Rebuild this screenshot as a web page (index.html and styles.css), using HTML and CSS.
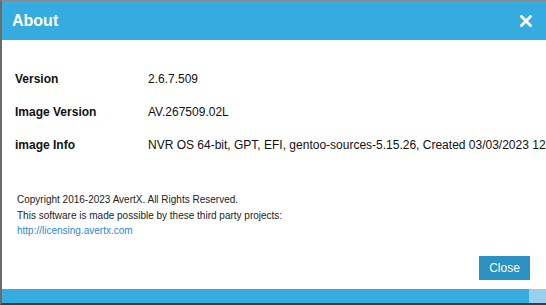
FILE: index.html
```html
<!DOCTYPE html>
<html>
<head>
<meta charset="utf-8">
<link rel="stylesheet" href="styles.css">
</head>
<body>
<div class="frame">
  <div class="dialog">
    <div class="header">
      <span class="title">About</span>
      <span class="close-x">
        <svg width="12" height="12" viewBox="0 0 12 12"><path d="M1.5 1.5 L10.5 10.5 M10.5 1.5 L1.5 10.5" stroke="#fff" stroke-width="2.8" stroke-linecap="square"/></svg>
      </span>
    </div>
    <div class="body">
      <div class="rows">
        <div class="row"><span class="label">Version</span><span class="value">2.6.7.509</span></div>
        <div class="row"><span class="label">Image Version</span><span class="value">AV.267509.02L</span></div>
        <div class="row"><span class="label">image Info</span><span class="value">NVR OS 64-bit, GPT, EFI, gentoo-sources-5.15.26, Created 03/03/2023 12:00</span></div>
      </div>
      <div class="legal">
        <div>Copyright 2016-2023 AvertX. All Rights Reserved.</div>
        <div>This software is made possible by these third party projects:</div>
        <div><a class="link" href="#">http://licensing.avertx.com</a></div>
      </div>
      <div class="actions"><button class="btn">Close</button></div>
    </div>
    <div class="footer"><div class="footer-main"></div><div class="footer-end"></div></div>
  </div>
</div>
</body>
</html>
```
FILE: styles.css
```css
html, body {
  margin: 0;
  padding: 0;
  width: 546px;
  height: 305px;
  overflow: hidden;
  background: #3a3a3a;
}
.frame {
  width: 546px;
  height: 305px;
  box-sizing: border-box;
  border-left: 2px solid #6b6b6b;
  border-top: 1px solid #8a8a8a;
  border-bottom: 2px solid #3c3c3c;
  background: #fff;
  overflow: hidden;
}
.dialog {
  display: flex;
  flex-direction: column;
  height: 100%;
  font-family: "Liberation Sans", Arial, sans-serif;
}
.header {
  height: 39px;
  background: #35abdf;
  display: flex;
  align-items: center;
  justify-content: space-between;
  padding: 0 14px 0 10px;
  flex: none;
}
.title {
  color: #fff;
  font-weight: bold;
  font-size: 16px;
  padding-top: 1px;
}
.close-x {
  display: flex;
  padding-top: 1px;
}
.body {
  flex: 1;
  display: flex;
  flex-direction: column;
  overflow: hidden;
}
.rows {
  padding: 32px 0 0 13px;
  display: flex;
  flex-direction: column;
  gap: 19px;
}
.row {
  display: flex;
  font-size: 12px;
  line-height: 14px;
  color: #111;
  white-space: nowrap;
}
.label {
  width: 133px;
  flex: none;
  font-weight: bold;
}
.legal {
  padding: 40px 0 0 15px;
  font-size: 10px;
  line-height: 15.5px;
  color: #222;
}
.link {
  color: #2e86d6;
  text-decoration: none;
}
.actions {
  display: flex;
  justify-content: flex-end;
  padding: 17px 16px 0 0;
}
.btn {
  background: #2a91c2;
  color: #fff;
  border: none;
  font-family: "Liberation Sans", Arial, sans-serif;
  font-size: 12px;
  width: 51px;
  height: 24px;
  padding: 0;
}
.footer {
  height: 14px;
  display: flex;
  flex: none;
}
.footer-main {
  flex: 1;
  background: #35abdf;
}
.footer-end {
  width: 17px;
  background: #98cfee;
}
```
